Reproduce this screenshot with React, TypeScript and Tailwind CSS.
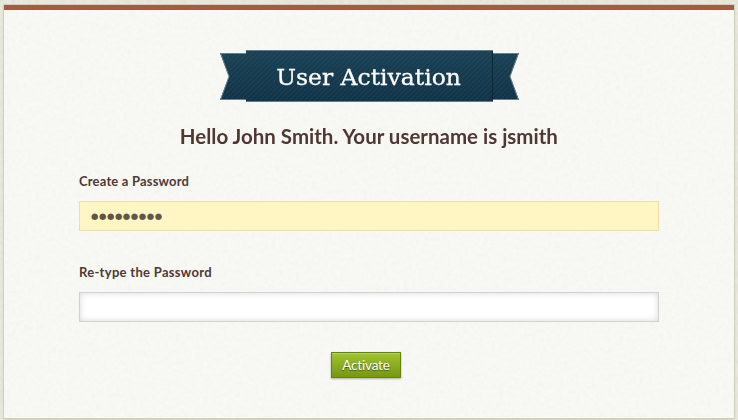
import React from "react";

function Paper({ id, opacity }: { id: string; opacity: number }) {
  return (
    <svg className="pointer-events-none absolute inset-0 h-full w-full" aria-hidden="true">
      <filter id={id}>
        <feTurbulence type="fractalNoise" baseFrequency="0.25" numOctaves="3" seed="4" />
        <feColorMatrix type="matrix" values="0 0 0 0 0.62  0 0 0 0 0.61  0 0 0 0 0.55  1.6 0 0 0 -0.6" />
      </filter>
      <rect width="100%" height="100%" filter={`url(#${id})`} opacity={opacity} />
    </svg>
  );
}

function Ribbon() {
  return (
    <div className="relative flex h-[52px] w-[299px] items-center justify-center">
      <svg className="absolute inset-0" width="299" height="52" viewBox="0 0 299 52" aria-hidden="true">
        <defs>
          <linearGradient id="navy" x1="0" y1="0" x2="0" y2="1">
            <stop offset="0" stopColor="#1b4256" />
            <stop offset="1" stopColor="#123347" />
          </linearGradient>
          <pattern id="stripes" width="5" height="5" patternUnits="userSpaceOnUse">
            <path d="M-1 6L6 -1M-1 1L1 -1M4 6L6 4" stroke="#4b7185" strokeWidth="0.7" opacity="0.28" />
          </pattern>
        </defs>
        <path d="M0 3H27V50H0L9 26.5Z" fill="url(#navy)" />
        <path d="M272 3H299L290 26.5L299 50H272Z" fill="url(#navy)" />
        <path d="M0 3H27V50H0L9 26.5ZM272 3H299L290 26.5L299 50H272Z" fill="url(#stripes)" />
        <path d="M27 3.5H.7L9 26.5L.7 49.5H27M272 3.5H298.3L290 26.5L298.3 49.5H272" fill="none" stroke="#698087" />
        <rect x="26" width="247" height="52" fill="url(#navy)" />
        <rect x="26" width="247" height="52" fill="url(#stripes)" />
        <path d="M26 .5H273M26 51.5H273" stroke="#637b84" />
        <path d="M272.5 1V51" stroke="#0c2838" />
      </svg>
      <h1 className="relative top-px origin-center scale-x-[1.02] whitespace-nowrap font-['DejaVu_Serif',serif] text-[23px] leading-none text-white [-webkit-text-stroke:0.3px_white]">
        User Activation
      </h1>
    </div>
  );
}

export default function App() {
  return (
    <main className="relative h-[420px] w-[738px] overflow-hidden bg-[#e9e8dc] pt-[5px] pl-1 font-['Lato',sans-serif] text-[#4f3833] [font-variant-ligatures:none]">
      <Paper id="paper-outer" opacity={0.35} />
      <section className="relative flex h-[413px] w-[730px] flex-col items-center border-t-[5px] border-[#a15c42] bg-[#f8f8f4] pt-10 shadow-[0_0_0_1px_#d0d0c2,0_1px_2px_#aaa99a]">
        <Paper id="paper-inner" opacity={0.1} />
        <Ribbon />
        <h2 className="relative mt-5 h-7 origin-center scale-x-[0.975] whitespace-nowrap text-[21px] leading-7 font-bold">
          Hello John Smith. Your username is jsmith
        </h2>
        <form className="relative flex w-[580px] flex-col" onSubmit={(e) => e.preventDefault()}>
          <label htmlFor="password" className="mt-[21px] h-5 text-[13px] leading-5 font-bold tracking-[0.18px]">
            Create a Password
          </label>
          <input
            id="password"
            readOnly
            value="●●●●●●●●●"
            className="mt-[10px] h-[30px] border border-[#f2dda9] bg-[#fff6c4] pl-[11px] font-['DejaVu_Sans',sans-serif] text-[8.5px] tracking-[0.55px] text-[#665442] outline-none"
          />
          <label htmlFor="confirm" className="mt-[31px] h-5 text-[13px] leading-5 font-bold tracking-[0.3px]">
            Re-type the Password
          </label>
          <input
            id="confirm"
            type="password"
            className="mt-[10px] h-[30px] border border-[#d1d1d1] bg-white px-[10px] shadow-[inset_0_0_6px_#d9d9d9] outline-none"
          />
          <button className="mt-[30px] ml-[252px] flex h-[26px] w-[70px] items-center justify-center self-start border border-[#65830d] bg-linear-to-b from-[#9fc52d] to-[#779713] text-[13.5px] tracking-[-0.2px] text-white shadow-[0_1px_2px_#aaa,inset_0_1px_0_#b4d25a] [text-shadow:0_1px_1px_#405617]">
            Activate
          </button>
        </form>
      </section>
    </main>
  );
}
